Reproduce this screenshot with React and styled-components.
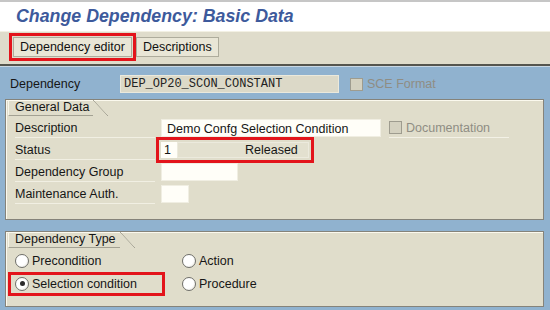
import styled, { createGlobalStyle } from "styled-components";

const GlobalStyle = createGlobalStyle`
  html, body {
    margin: 0;
    padding: 0;
    background: #90b2cf;
  }
  body {
    font-family: "Liberation Sans", Arial, sans-serif;
    font-size: 12.5px;
    color: #161616;
  }
`;

const RED = "#e3141b";

const Screen = styled.div`
  width: 550px;
  height: 310px;
  overflow: hidden;
  display: flex;
  flex-direction: column;
`;

const TitleBar = styled.div`
  height: 29px;
  border-top: 2px solid #c6c6c6;
  background: #fff;
  display: flex;
  align-items: center;
  padding-left: 16px;
`;

const Title = styled.h1`
  margin: 0;
  font-size: 17.8px;
  font-weight: bold;
  font-style: italic;
  color: #3d5a9c;
`;

const Toolbar = styled.div`
  height: 27px;
  background: #dfdccb;
  border-top: 1px solid #f3f1e4;
  border-bottom: 2px solid #55554e;
  display: flex;
  align-items: flex-start;
  gap: 4px;
  padding: 5px 0 0 13px;
  box-sizing: content-box;
`;

const ToolButton = styled.button`
  height: 20px;
  padding: 0 6px;
  font-family: inherit;
  font-size: 12.5px;
  color: #111;
  background: #e9e6d6;
  border: 1px solid #aeac9c;
  border-radius: 0;
  outline: ${(p) => (p.$marked ? `3px solid ${RED}` : "none")};
  outline-offset: 1px;
`;

const Content = styled.div`
  flex: 1;
  background: #90b2cf;
  border-top: 1px solid #c9d8e4;
  padding: 8px 6px 0 5px;
`;

const HeaderRow = styled.div`
  height: 18px;
  display: flex;
  align-items: center;
  padding-left: 5px;
`;

const HeaderLabel = styled.span`
  width: 110px;
`;

const CodeField = styled.div`
  width: 214px;
  height: 16px;
  padding-left: 3px;
  line-height: 16px;
  background: #dcd9c8;
  border: 1px solid #ebe9dc;
  font-family: "Liberation Mono", "Courier New", monospace;
  font-size: 12px;
  color: #222;
`;

const Group = styled.section`
  margin-top: ${(p) => p.$gap}px;
  height: ${(p) => p.$h}px;
  box-sizing: border-box;
  background: #e0ddcb;
  border: 1px solid #85837a;
  box-shadow: inset 1px 1px 0 #fbf9ee;
`;

const GroupTab = styled.div`
  position: relative;
  display: inline-block;
  height: 15px;
  line-height: 15px;
  margin-left: 2px;
  padding: 0 4px 0 6px;
  border-bottom: 1px solid #a3a193;
  border-left: 1px solid #f8f6ea;
  &::after {
    content: "";
    position: absolute;
    top: 0;
    right: -15px;
    width: 15px;
    height: 16px;
    background: linear-gradient(
      to top right,
      transparent calc(50% - 0.6px),
      #a3a193 50%,
      transparent calc(50% + 0.6px)
    );
  }
`;

const FieldList = styled.div`
  padding: 1px 0 0 9px;
`;

const FieldRow = styled.div`
  height: 22px;
  display: flex;
  align-items: center;
`;

const Label = styled.span`
  width: 140px;
  margin-right: 6px;
  height: 18px;
  line-height: 18px;
  border-bottom: 1px solid #f1efe3;
`;

const Input = styled.div`
  width: ${(p) => p.$w}px;
  height: 18px;
  box-sizing: border-box;
  padding-left: 5px;
  line-height: 18px;
  background: #fffef8;
  border: 1px solid #f0eee2;
  white-space: nowrap;
`;

const StatusField = styled.div`
  display: flex;
  width: 148px;
  height: 16px;
  outline: 3px solid ${RED};
  outline-offset: 2px;
`;

const StatusKey = styled.div`
  width: 13px;
  padding-left: 3px;
  background: #fffef8;
  line-height: 16px;
`;

const StatusText = styled.div`
  flex: 1;
  padding-left: 67px;
  line-height: 14px;
  background: #e3e0cf;
  border: 1px solid #eceadd;
`;

const CheckItem = styled.label`
  display: flex;
  align-items: center;
  gap: 4px;
  margin-left: ${(p) => p.$ml}px;
  color: #8f8d84;
  width: ${(p) => (p.$w ? `${p.$w}px` : "auto")};
  height: 18px;
  border-bottom: ${(p) => (p.$line ? "1px solid #f3f1e6" : "none")};
`;

const Box = styled.span`
  width: 13px;
  height: 13px;
  box-sizing: border-box;
  background: #d4d1c0;
  border: 1px solid #9e9c8f;
`;

const RadioGrid = styled.div`
  display: grid;
  grid-template-columns: 167px auto;
  grid-auto-rows: 23px;
  align-items: center;
  padding: 1px 0 0 5px;
`;

const RadioOption = styled.label`
  display: flex;
  align-items: center;
  gap: 3px;
  height: 18px;
  width: 147px;
  padding-left: 4px;
  outline: ${(p) => (p.$marked ? `3px solid ${RED}` : "none")};
  outline-offset: 0;
`;

const Dot = styled.span`
  width: 14px;
  height: 14px;
  box-sizing: border-box;
  border-radius: 50%;
  border: 1px solid #6f6f6a;
  background: radial-gradient(circle at 35% 35%, #fff 0, #fff 55%, #dedcd0 100%);
  display: flex;
  align-items: center;
  justify-content: center;
  &::after {
    content: "";
    width: 5px;
    height: 5px;
    border-radius: 50%;
    background: ${(p) => (p.$on ? "#2b2b2b" : "transparent")};
  }
`;

function Radio({ children, on, marked }) {
  return (
    <RadioOption $marked={marked}>
      <Dot $on={on} />
      {children}
    </RadioOption>
  );
}

export default function App() {
  return (
    <Screen>
      <GlobalStyle />
      <TitleBar>
        <Title>Change Dependency: Basic Data</Title>
      </TitleBar>
      <Toolbar>
        <ToolButton $marked>Dependency editor</ToolButton>
        <ToolButton>Descriptions</ToolButton>
      </Toolbar>
      <Content>
        <HeaderRow>
          <HeaderLabel>Dependency</HeaderLabel>
          <CodeField>DEP_OP20_SCON_CONSTANT</CodeField>
          <CheckItem $ml={11}>
            <Box />
            SCE Format
          </CheckItem>
        </HeaderRow>

        <Group $gap={6} $h={121}>
          <GroupTab>General Data</GroupTab>
          <FieldList>
            <FieldRow>
              <Label>Description</Label>
              <Input $w={220}>Demo Confg Selection Condition</Input>
              <CheckItem $ml={8} $w={120} $line>
                <Box />
                Documentation
              </CheckItem>
            </FieldRow>
            <FieldRow>
              <Label>Status</Label>
              <StatusField>
                <StatusKey>1</StatusKey>
                <StatusText>Released</StatusText>
              </StatusField>
            </FieldRow>
            <FieldRow>
              <Label>Dependency Group</Label>
              <Input $w={77} />
            </FieldRow>
            <FieldRow>
              <Label>Maintenance Auth.</Label>
              <Input $w={28} />
            </FieldRow>
          </FieldList>
        </Group>

        <Group $gap={11} $h={76}>
          <GroupTab>Dependency Type</GroupTab>
          <RadioGrid>
            <Radio>Precondition</Radio>
            <Radio>Action</Radio>
            <Radio on marked>
              Selection condition
            </Radio>
            <Radio>Procedure</Radio>
          </RadioGrid>
        </Group>
      </Content>
    </Screen>
  );
}
